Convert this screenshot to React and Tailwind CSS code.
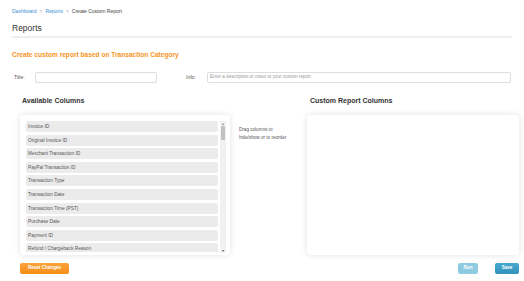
import React from "react";

const columns = [
  "Invoice ID",
  "Original Invoice ID",
  "Merchant Transaction ID",
  "PayPal Transaction ID",
  "Transaction Type",
  "Transaction Date",
  "Transaction Time (PST)",
  "Purchase Date",
  "Payment ID",
  "Refund / Chargeback Reason",
  "Refund Amount",
];

export default function App() {
  return (
    <div className="w-[524px] h-[281px] overflow-hidden bg-white font-['Liberation_Sans',Arial,sans-serif] text-[#333]">
      {/* breadcrumb */}
      <div className="flex items-center gap-[3px] pl-[12px] pt-[8px] h-[14px] text-[5px] leading-none">
        <span className="text-[#3b8fd3]">Dashboard</span>
        <span className="text-[#999]">&gt;</span>
        <span className="text-[#3b8fd3]">Reports</span>
        <span className="text-[#999]">&gt;</span>
        <span className="text-[#444]">Create Custom Report</span>
      </div>

      <div className="mx-[12px] mt-[10px] text-[8.5px] leading-none text-[#333]">Reports</div>
      <div className="mx-[12px] mt-[3px] h-[2px] bg-[#efefef]" />

      <div className="mx-[12px] mt-[14px] text-[6.6px] font-bold leading-none text-[#f7941d]">
        Create custom report based on Transaction Category
      </div>

      {/* title / info row */}
      <div className="flex items-center mt-[14px] h-[11px]">
        <span className="ml-[14px] w-[21px] text-[5px] text-[#555]">Title:</span>
        <div className="w-[122px] h-[11px] border border-[#ddd] rounded-[2px] bg-white" />
        <span className="ml-[29px] w-[21px] text-[5px] text-[#555]">Info:</span>
        <div className="flex items-center w-[304px] h-[11px] border border-[#ddd] rounded-[2px] bg-white pl-[2px] text-[4.6px] text-[#999]">
          Enter a description or notes to your custom report
        </div>
      </div>

      {/* column headings */}
      <div className="flex mt-[14px] h-[8px] items-center text-[7px] font-bold text-[#333]">
        <span className="ml-[22px] w-[288px]">Available Columns</span>
        <span>Custom Report Columns</span>
      </div>

      {/* panels */}
      <div className="flex mt-[10px] ml-[20px]">
        <div className="flex w-[210px] h-[140px] bg-white rounded-[4px] shadow-[0_0_6px_rgba(0,0,0,0.12)] pl-[6px] pt-[6px] pr-[4px] pb-[3px]">
          <div className="flex flex-col gap-[2.6px] w-[192px] overflow-hidden">
            {columns.map((c) => (
              <div
                key={c}
                className="shrink-0 flex items-center h-[11px] bg-[#ebebeb] rounded-[2px] pl-[2px] text-[4.8px] text-[#555]"
              >
                {c}
              </div>
            ))}
          </div>
          <div className="ml-[2px] w-[6px] h-[132px] bg-[#f1f1f1] flex flex-col items-center">
            <div className="h-[5px] text-[4px] leading-[5px] text-[#888]">▴</div>
            <div className="w-[4px] h-[14px] bg-[#c1c1c1] rounded-[1px]" />
            <div className="flex-1" />
            <div className="h-[5px] text-[4px] leading-[5px] text-[#555]">▾</div>
          </div>
        </div>

        <div className="w-[77px] pl-[9px] pt-[11px] text-[4.6px] leading-[8px] text-[#555]">
          Drag columns to
          <br />
          hide/show or to reorder
        </div>

        <div className="w-[212px] h-[140px] bg-white rounded-[4px] shadow-[0_0_6px_rgba(0,0,0,0.12)]" />
      </div>

      {/* buttons */}
      <div className="flex items-center mt-[8px] ml-[20px] w-[499px]">
        <div className="flex items-center justify-center h-[11px] w-[49px] rounded-[2px] bg-gradient-to-b from-[#fba33a] to-[#f58d12] text-white text-[4.6px] leading-none font-bold whitespace-nowrap">
          Reset Changes
        </div>
        <div className="flex-1" />
        <div className="flex items-center justify-center h-[11px] w-[20px] rounded-[2px] bg-[#8ccbe0] text-white text-[4.6px] leading-none font-bold">
          Run
        </div>
        <div className="flex items-center justify-center ml-[17px] h-[11px] w-[24px] rounded-[2px] bg-gradient-to-b from-[#47a9cf] to-[#3192ba] text-white text-[4.6px] leading-none font-bold">
          Save
        </div>
      </div>
    </div>
  );
}
